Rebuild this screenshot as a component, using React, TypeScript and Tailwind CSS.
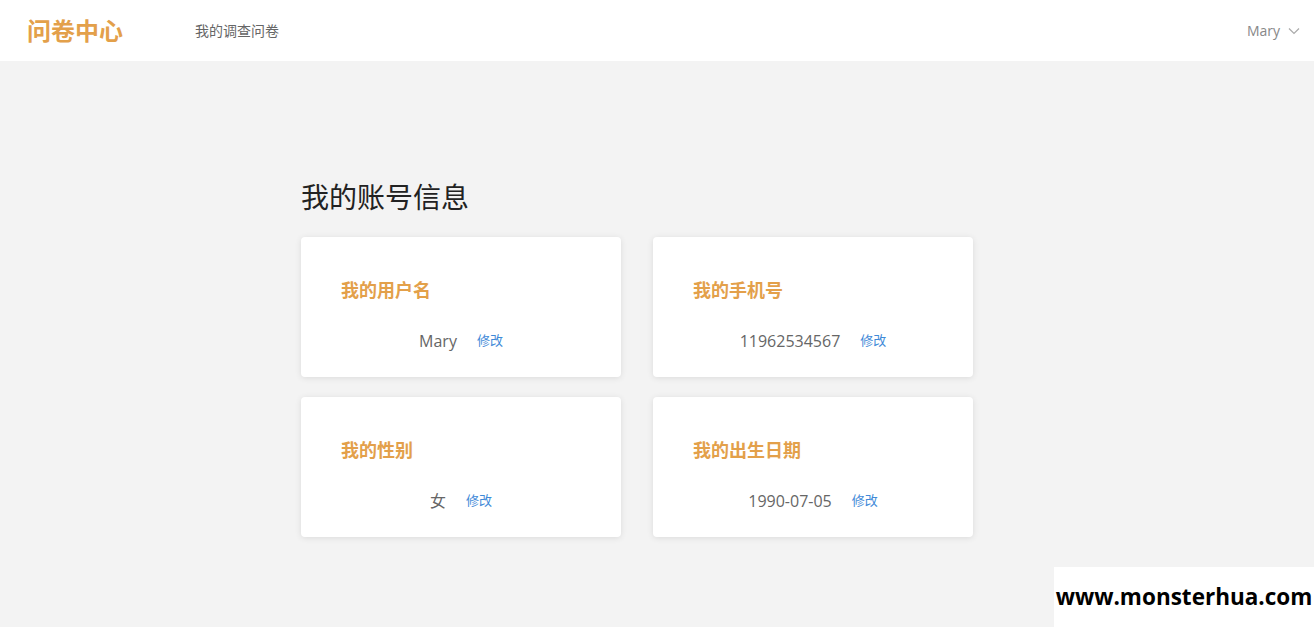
import React from "react";

type Item = { label: string; value: string };

const items: Item[] = [
  { label: "我的用户名", value: "Mary" },
  { label: "我的手机号", value: "11962534567" },
  { label: "我的性别", value: "女" },
  { label: "我的出生日期", value: "1990-07-05" },
];

const font = { fontFamily: '"Open Sans", "Noto Sans CJK SC", sans-serif' };

export default function App() {
  return (
    <div className="min-h-[627px] bg-[#f3f3f3] relative" style={font}>
      {/* Header */}
      <header className="flex h-[61px] items-center bg-white">
        <div className="ml-[27px] w-[168px] text-[24px] font-bold text-[#e3a04a] leading-none">问卷中心</div>
        <nav className="text-[14px] text-[#666]">我的调查问卷</nav>
        <div className="ml-auto mr-[14px] flex items-center gap-[8px] text-[14px] text-[#888]">
          <span>Mary</span>
          <svg width="12" height="8" viewBox="0 0 12 8" fill="none" stroke="#aaa" strokeWidth="1.2">
            <path d="M1 1.5 6 6.5 11 1.5" />
          </svg>
        </div>
      </header>

      {/* Content */}
      <section className="ml-[301px] w-[672px] pt-[118px]">
        <h1 className="text-[28px] leading-[36px] font-normal text-[#222]">我的账号信息</h1>
        <div className="mt-[22px] grid grid-cols-2 gap-x-[32px] gap-y-[20px]">
          {items.map((it) => (
            <div
              key={it.label}
              className="h-[140px] rounded-[4px] bg-white px-[40px] pt-[40px] shadow-[0_1px_6px_rgba(0,0,0,0.1)]"
            >
              <h2 className="text-[18px] leading-[26px] font-bold text-[#e3a04a]">{it.label}</h2>
              <div className="mt-[26px] flex items-center justify-center gap-[20px]">
                <span className="text-[16px] text-[#666]">{it.value}</span>
                <button type="button" className="text-[13px] text-[#3f8ad8]">修改</button>
              </div>
            </div>
          ))}
        </div>
      </section>

      {/* Watermark */}
      <div className="absolute right-0 bottom-0 flex h-[60px] w-[260px] items-center justify-center bg-white">
        <span className="text-[22.5px] font-bold text-black" style={{ fontFamily: '"Open Sans", sans-serif' }}>
          www.monsterhua.com
        </span>
      </div>
    </div>
  );
}
